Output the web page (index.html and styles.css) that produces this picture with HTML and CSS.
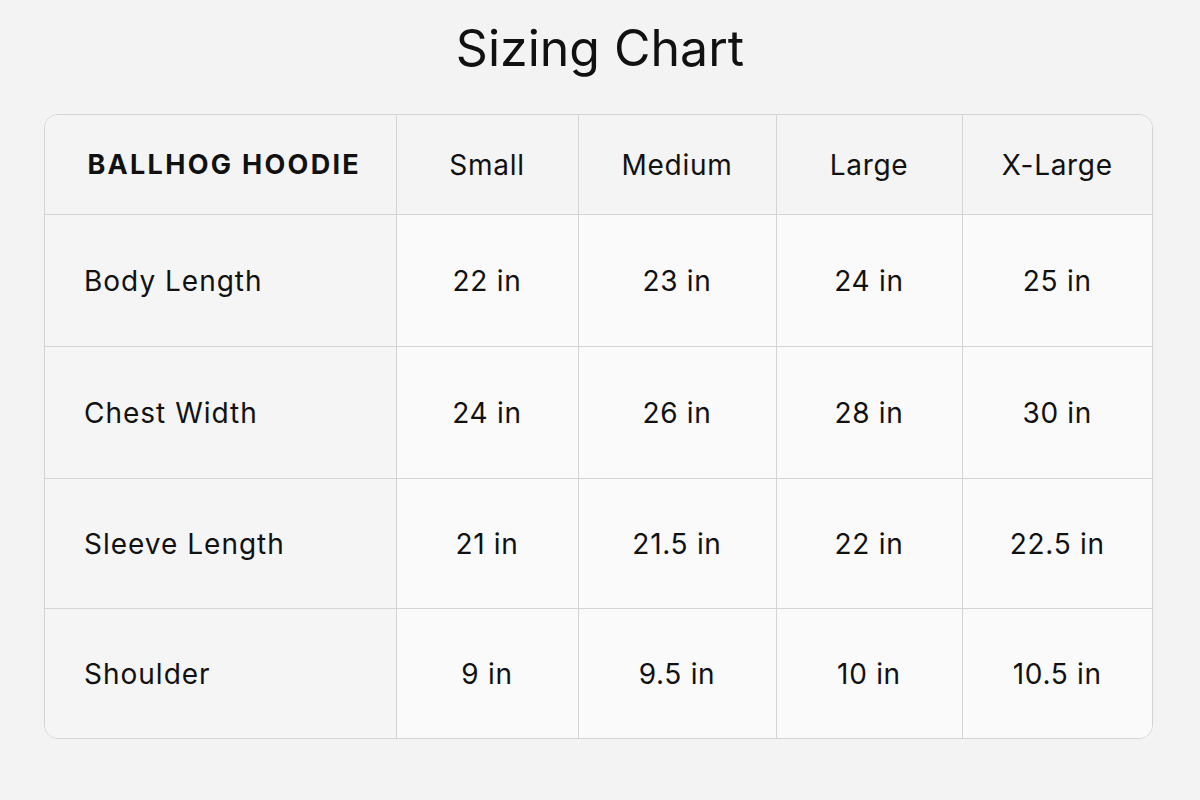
FILE: index.html
```html
<!DOCTYPE html>
<html>
<head>
<meta charset="utf-8">
<link rel="stylesheet" href="styles.css">
</head>
<body>
<h1 class="title">Sizing Chart</h1>
<div class="card">
<table class="chart">
<colgroup>
<col class="c1"><col class="c2"><col class="c3"><col class="c4"><col class="c5">
</colgroup>
<thead>
<tr><th class="product">BALLHOG HOODIE</th><th>Small</th><th>Medium</th><th>Large</th><th>X-Large</th></tr>
</thead>
<tbody>
<tr class="r1"><td class="label">Body Length</td><td>22 in</td><td>23 in</td><td>24 in</td><td>25 in</td></tr>
<tr class="r2"><td class="label">Chest Width</td><td>24 in</td><td>26 in</td><td>28 in</td><td>30 in</td></tr>
<tr class="r3"><td class="label">Sleeve Length</td><td>21 in</td><td>21.5 in</td><td>22 in</td><td>22.5 in</td></tr>
<tr class="r4"><td class="label">Shoulder</td><td>9 in</td><td>9.5 in</td><td>10 in</td><td>10.5 in</td></tr>
</tbody>
</table>
</div>
</body>
</html>
```
FILE: styles.css
```css
html, body {
  margin: 0;
  padding: 0;
  background: #f3f3f3;
  font-family: Inter, Lato, "Liberation Sans", sans-serif;
  color: #111;
}
.title {
  margin: 0;
  padding-top: 18px;
  height: 114px;
  box-sizing: border-box;
  text-align: center;
  font-weight: 400;
  font-size: 50px;
  line-height: 60px;
}
.card {
  margin: 0 46px 0 44px;
  border: 1.5px solid #d4d4d4;
  border-radius: 14px;
  overflow: hidden;
  width: 1107px;
  background: #f8f8f8;
}
.chart {
  border-collapse: collapse;
  width: 100%;
  table-layout: fixed;
}
.c1 { width: 351px; }
.c2 { width: 182px; }
.c3 { width: 198px; }
.c4 { width: 186px; }
.c5 { width: auto; }
.chart th, .chart td {
  border: 1px solid #d4d4d4;
  text-align: center;
  font-size: 28px;
  letter-spacing: 0.7px;
  padding: 0;
}
.chart tr > *:first-child { border-left: none; }
.chart tr > *:last-child { border-right: none; }
.chart thead th { border-top: none; }
.chart tbody tr:last-child td { border-bottom: none; }
.chart thead th {
  height: 99px;
  font-weight: 400;
  background: #f4f4f4;
}
.chart thead th.product {
  font-weight: 700;
  font-size: 27px;
  letter-spacing: 2.3px;
  padding-left: 8px;
}
.chart tbody td {
  height: 130px;
  background: #fafafa;
}
.chart tbody td.label {
  text-align: left;
  padding-left: 39px;
  background: #f5f5f5;
  letter-spacing: 1px;
}
.chart tbody tr.r1 td, .chart tbody tr.r2 td { height: 131px; }
.chart tbody tr.r3 td, .chart tbody tr.r4 td { height: 129px; }
```
